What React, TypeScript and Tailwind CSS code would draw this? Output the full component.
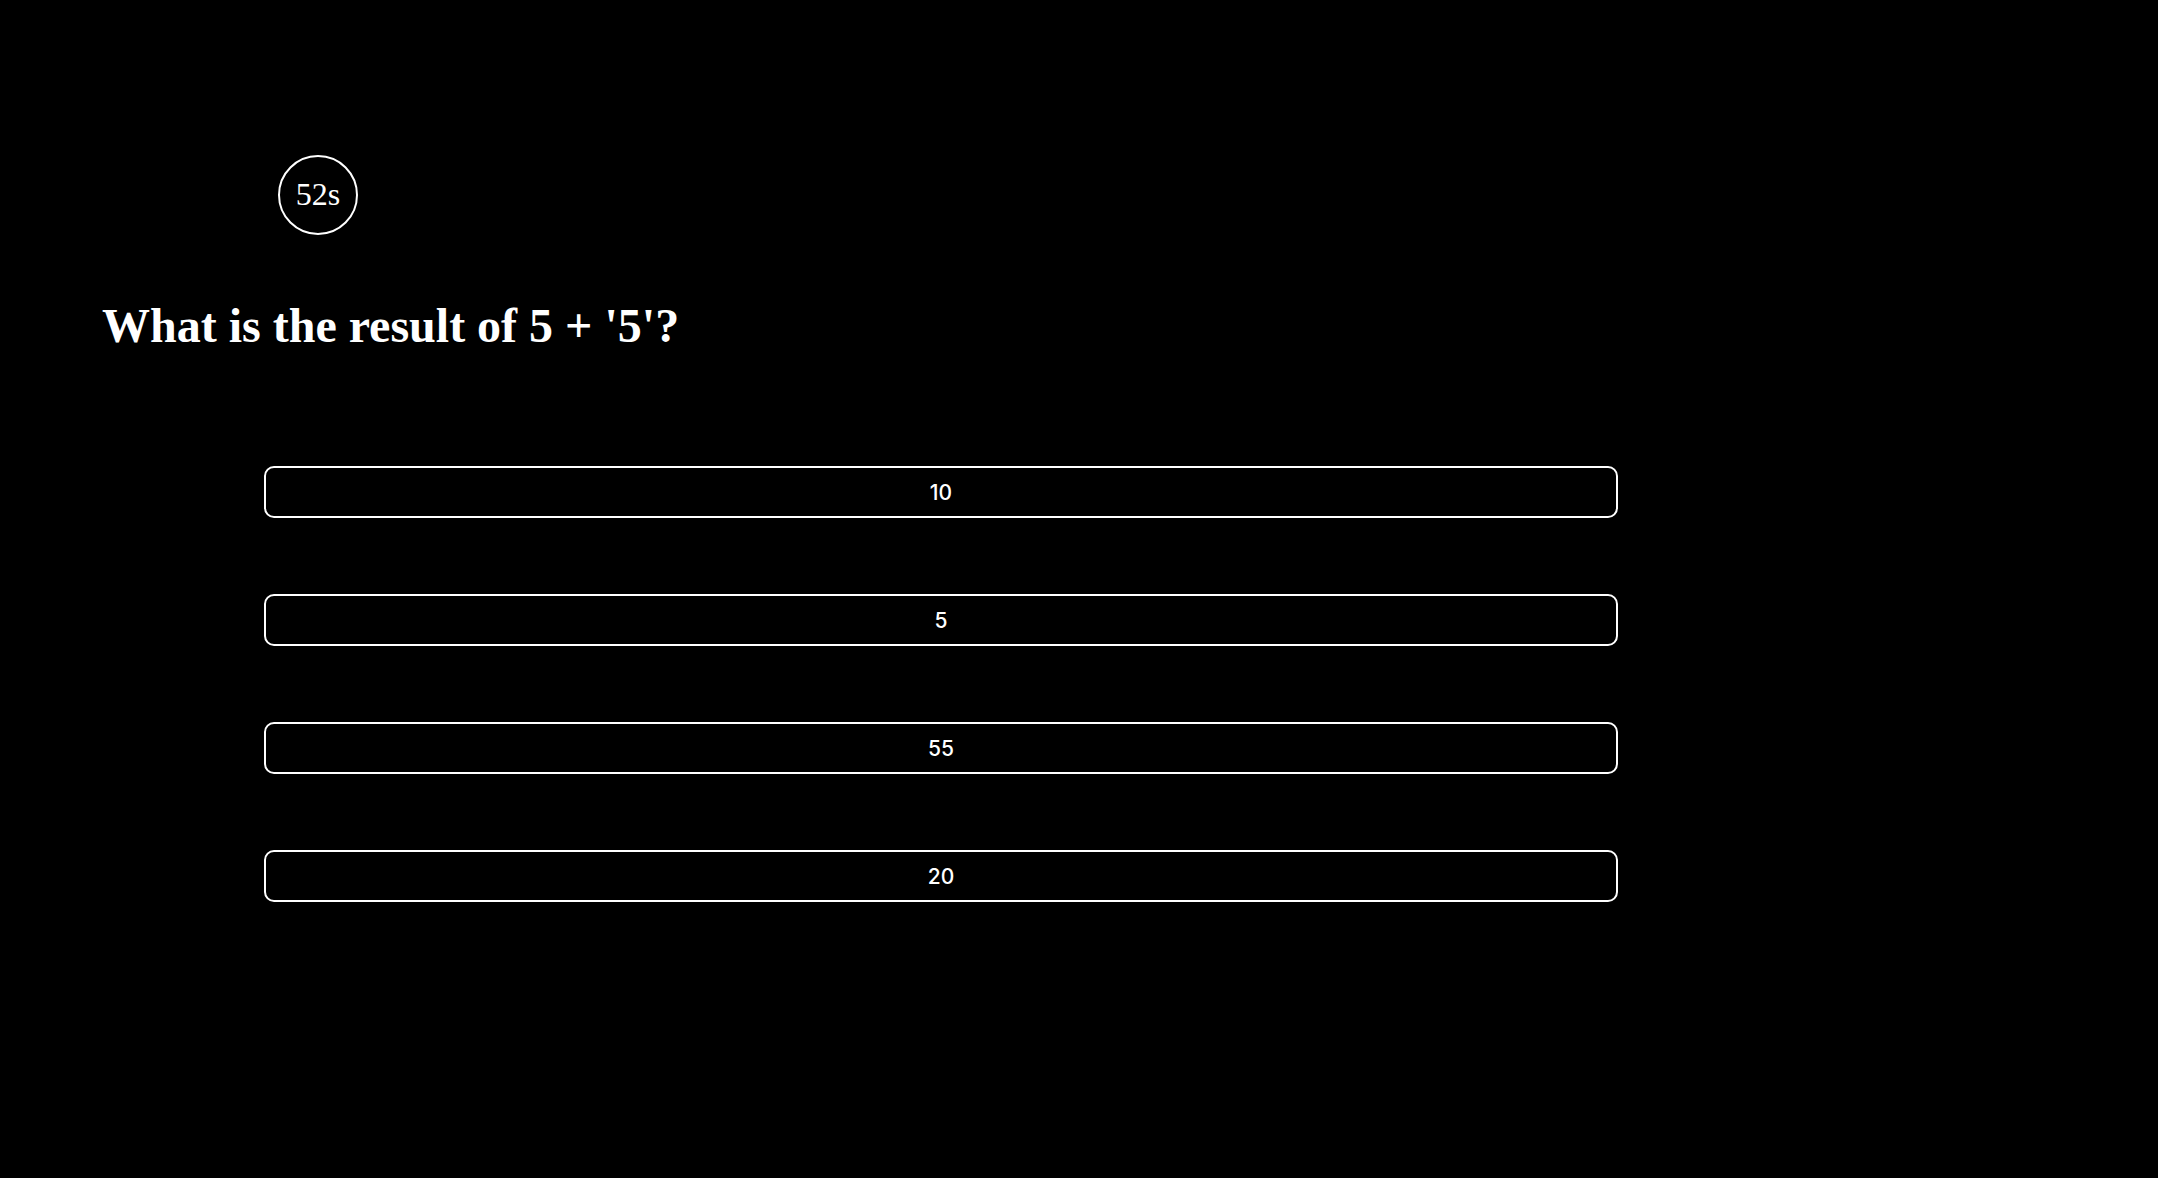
const options = ['10', '5', '55', '20'];

export default function App() {
  return (
    <div className="min-h-[1178px] w-full bg-black text-white">
      <div className="pt-[155px] pl-[278px]">
        <div
          className="flex h-20 w-20 items-center justify-center rounded-full border-2 border-white pb-[2px] text-[32px]"
          style={{ fontFamily: '"Liberation Serif", serif' }}
        >
          52s
        </div>
      </div>
      <h1
        className="mt-[63px] pl-[102px] text-[48px] font-bold leading-[1.149]"
        style={{ fontFamily: '"Liberation Serif", serif' }}
      >
        What is the result of 5 + '5'?
      </h1>
      <div className="mt-[113px] ml-[264px] flex w-[1354px] flex-col gap-[76px]">
        {options.map(opt => (
          <button
            key={opt}
            className="flex h-[52px] w-full items-center justify-center rounded-[10px] border-2 border-white bg-black pt-[2px] text-[21px] font-medium text-white"
            style={{ fontFamily: 'Inter, sans-serif' }}
          >
            {opt}
          </button>
        ))}
      </div>
    </div>
  );
}
